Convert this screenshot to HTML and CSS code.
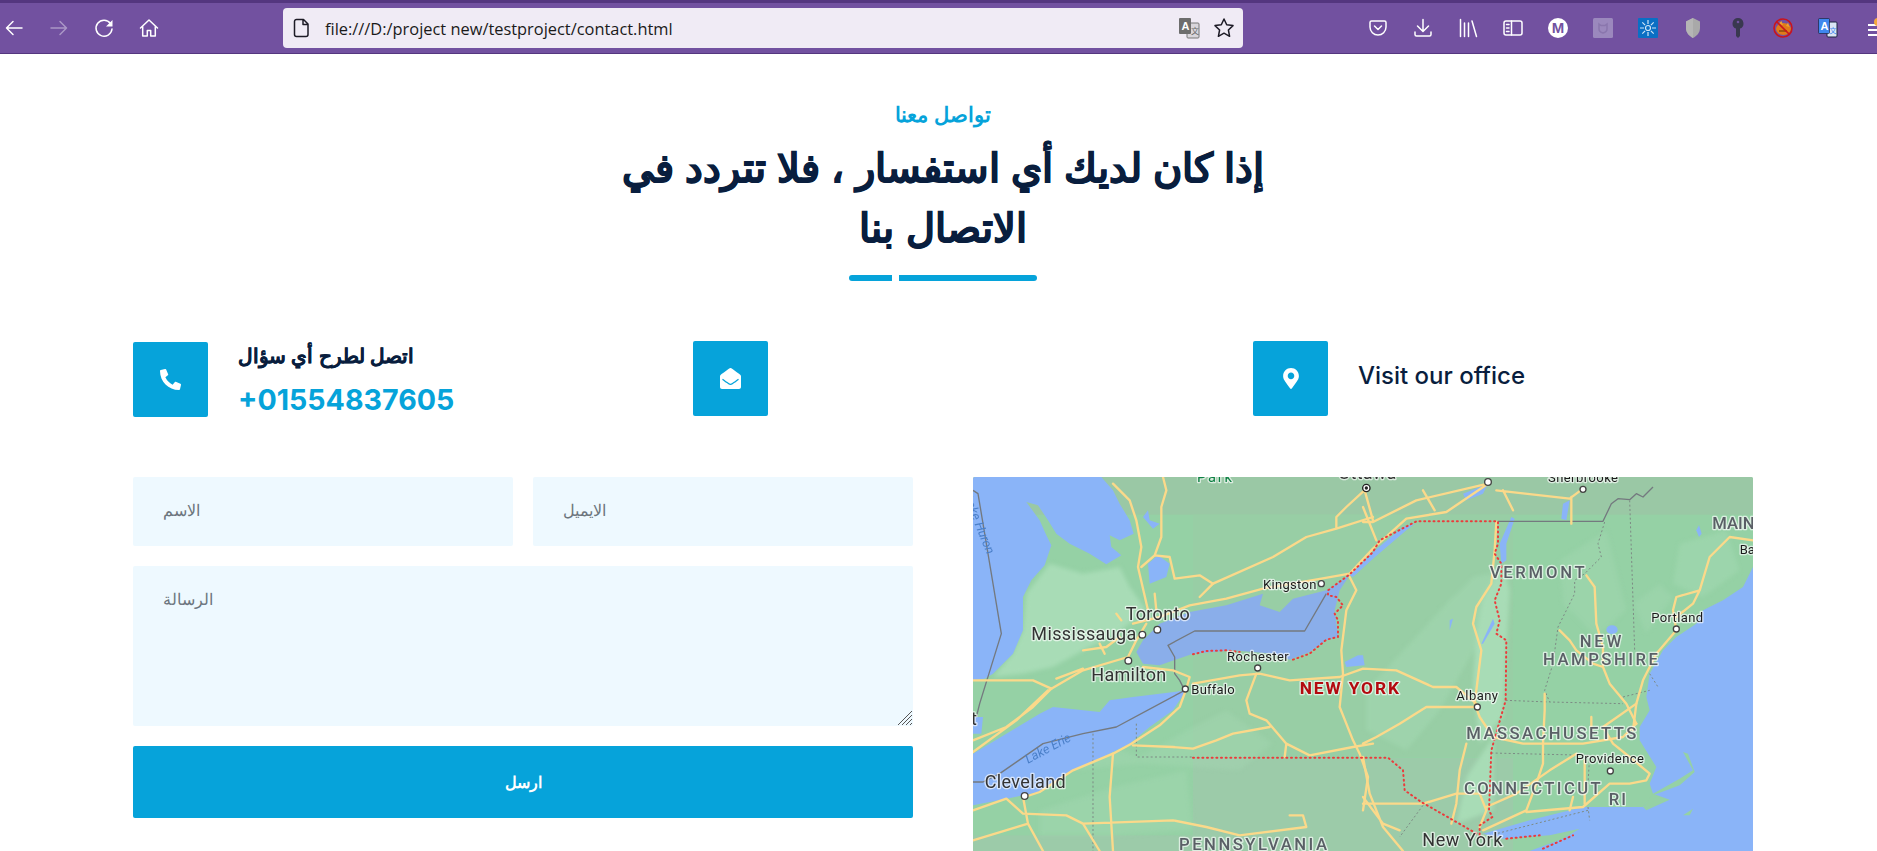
FILE: index.html
```html
<!DOCTYPE html>
<html lang="ar">
<head>
  <meta charset="UTF-8" />
  <meta name="viewport" content="width=device-width, initial-scale=1.0" />
  <title>contact</title>
  <link rel="stylesheet" href="styles.css">
</head>
<body>
  <!-- browser bar -->
  <header class="toolbar">
    <div class="nav-btns">
      <span class="tb-btn"><svg width="20" height="20" viewBox="0 0 20 20" class="ic"><path d="M18 10H2.500M9 3.500 2.500 10 9 16.500"/></svg></span>
      <span class="tb-btn dim"><svg width="20" height="20" viewBox="0 0 20 20" class="ic"><path d="M2 10h15.500M11 3.500 17.500 10 11 16.500"/></svg></span>
      <span class="tb-btn"><svg width="20" height="20" viewBox="0 0 20 20" class="ic"><path d="M16.500 5.500A8 8 0 1 0 18 11"/><path class="solid" d="M18.500 2v6.500H12z"/></svg></span>
      <span class="tb-btn"><svg width="20" height="20" viewBox="0 0 20 20" class="ic"><path d="M1.500 10 10 2l8.500 8M3.700 8.500V18h4.600v-5.500h3.400V18h4.600V8.500"/></svg></span>
    </div>
    <div class="urlbar">
      <svg class="ic dark" width="18" height="20" viewBox="0 0 18 20"><path d="M3.500 1.500h7l4.500 4.500v10.500a2 2 0 0 1-2 2H3.500a2 2 0 0 1-2-2v-13a2 2 0 0 1 2-2zM10 1.500V6.500h5"/></svg>
      <span class="url-text">file:///D:/project new/testproject/contact.html</span>
      <svg class="url-trans" width="22" height="22" viewBox="0 0 22 22"><rect x="9" y="6" width="12" height="15" rx="1" fill="#d9d6dc" stroke="#777"/><rect x="1" y="1" width="12" height="16" rx="1" fill="#6d6d6d"/><text x="3.500" y="13" class="tr-a">A</text><text x="13" y="17" class="tr-b">文</text></svg>
      <svg class="ic dark" width="22" height="22" viewBox="0 0 22 22"><path d="m11 2 2.700 5.800 6.300.8-4.600 4.400 1.200 6.300L11 16.200l-5.600 3.100 1.200-6.300L2 8.600l6.300-.8z"/></svg>
    </div>
    <div class="ext-btns">
      <span class="tb-btn"><svg width="20" height="20" viewBox="0 0 20 20" class="ic"><path d="M3.500 3h13A1.500 1.500 0 0 1 18 4.500V9a8 8 0 0 1-16 0V4.500A1.500 1.500 0 0 1 3.500 3z"/><path d="m6.500 8 3.500 3.500L13.500 8"/></svg></span>
      <span class="tb-btn"><svg width="20" height="20" viewBox="0 0 20 20" class="ic"><path d="M10 1.500V13M4.500 8l5.500 5.500L15.500 8M2 14v2.500A1.500 1.500 0 0 0 3.500 18h13a1.500 1.500 0 0 0 1.500-1.500V14"/></svg></span>
      <span class="tb-btn"><svg width="20" height="20" viewBox="0 0 20 20" class="ic"><path d="M2.500 1.500v17M6.500 5v13.500M10.500 5v13.500M14 3l4.500 15.500"/></svg></span>
      <span class="tb-btn"><svg width="20" height="20" viewBox="0 0 20 20" class="ic"><rect x="1" y="3" width="18" height="14" rx="2"/><path d="M8.500 3v14M3.500 6.500H6M3.500 10H6M3.500 13.500H6"/></svg></span>
      <span class="tb-btn"><svg width="20" height="20" viewBox="0 0 20 20"><circle cx="10" cy="10" r="10" fill="#fff"/><text x="10" y="15" class="m-txt">M</text></svg></span>
      <span class="tb-btn"><svg width="20" height="20" viewBox="0 0 20 20"><rect width="20" height="20" rx="1.500" fill="#9b88bd"/><path d="M6 6l2 1.500h4L14 6v5c0 2-2 3.500-4 4-2-.5-4-2-4-4z" fill="none" stroke="#8a76ad" stroke-width="1.500"/></svg></span>
      <span class="tb-btn"><svg width="20" height="20" viewBox="0 0 20 20"><rect width="20" height="20" rx="1" fill="#0a6fc4"/><g stroke="#cfe6f7" stroke-width="1.200"><path d="M10 2v4M10 14v4M2 10h4M14 10h4M4.300 4.300l2.800 2.800M15.700 4.300l-2.800 2.800M4.300 15.700l2.800-2.800M15.700 15.700l-2.800-2.800"/><circle cx="10" cy="10" r="2.500" fill="none"/></g></svg></span>
      <span class="tb-btn"><svg width="16" height="20" viewBox="0 0 16 20"><path d="M8 0 15 3.500V10c0 5-3.500 8-7 10-3.500-2-7-5-7-10V3.500z" fill="#a9a9a9"/><path d="M8 0 1 3.500V10c0 5 3.500 8 7 10z" fill="#b5b5b5"/></svg></span>
      <span class="tb-btn"><svg width="12" height="20" viewBox="0 0 12 20"><path d="M6 0a5.500 5.500 0 0 1 2 10.600V18l-2 2-2-2v-7.400A5.500 5.500 0 0 1 6 0z" fill="#39384f"/><circle cx="6" cy="4" r="1.300" fill="#7251a0"/></svg></span>
      <span class="tb-btn"><svg width="20" height="20" viewBox="0 0 20 20"><ellipse cx="10.500" cy="11" rx="7.500" ry="6" fill="#e07b1a"/><path d="M5 6l3.500-3 1.500 4zM15 4.500l1.500 4.500-3.500-1z" fill="#f0a030"/><path d="M6 13h8" stroke="#8a4a10" stroke-width="1.500"/><circle cx="10" cy="10" r="9" fill="none" stroke="#c9141e" stroke-width="1.600"/><path d="m3.700 3.700 12.600 12.600" stroke="#c9141e" stroke-width="1.600"/></svg></span>
      <span class="tb-btn"><svg width="20" height="20" viewBox="0 0 20 20"><rect x="9" y="4" width="10" height="15" rx="1" fill="#dce6f5" stroke="#1d2440"/><rect x="0.500" y="0.500" width="11" height="15" rx="1" fill="#3f87ee" stroke="#1d2440" stroke-width=".7"/><text x="2.500" y="11.500" class="tr-w">A</text><text x="11.500" y="15" class="tr-c">文</text></svg></span>
      <span class="tb-btn"><svg width="20" height="20" viewBox="0 0 20 20"><path d="M5 7h15M5 12h15M5 17h15" stroke="#fff" stroke-width="2" fill="none"/><circle cx="15" cy="4" r="4" fill="#f4a93c"/></svg></span>
    </div>
  </header>

  <main class="page">
    <div class="section-title">
      <h5 class="sub" dir="rtl">تواصل معنا</h5>
      <h1 class="main-title" dir="rtl">إذا كان لديك أي استفسار ، فلا تتردد في الاتصال بنا</h1>
      <div class="divider"><span class="bar-short"></span><span class="bar-long"></span></div>
    </div>

    <div class="info-row">
      <div class="info-item">
        <div class="info-icon"><svg width="21" height="21" viewBox="0 0 512 512"><path d="M497.390 361.800l-112-48a24 24 0 0 0-28 6.900l-49.600 60.600A370.660 370.660 0 0 1 130.600 204.110l60.600-49.600a23.940 23.940 0 0 0 6.900-28l-48-112A24.160 24.160 0 0 0 122.600.610l-104 24A24 24 0 0 0 0 48c0 256.500 207.900 464 464 464a24 24 0 0 0 23.400-18.600l24-104a24.290 24.290 0 0 0-14.010-27.600z"/></svg></div>
        <div class="info-text">
          <h5 class="info-label" dir="rtl">اتصل لطرح أي سؤال</h5>
          <h4 class="info-value">+01554837605</h4>
        </div>
      </div>
      <div class="info-item">
        <div class="info-icon"><svg width="21" height="21" viewBox="0 0 512 512"><path d="M512 464c0 26.510-21.490 48-48 48H48c-26.510 0-48-21.490-48-48V200.724a48 48 0 0 1 18.387-37.776c24.913-19.529 45.501-35.365 164.200-121.511C199.412 29.170 232.797-.347 256 .003c23.198-.354 56.596 29.172 73.413 41.433 118.687 86.137 139.303 101.995 164.200 121.512A48 48 0 0 1 512 200.724V464zm-65.666-196.605c-2.563-3.728-7.700-4.595-11.339-1.907-22.845 16.873-55.462 40.705-105.582 77.079-16.825 12.266-50.210 41.781-73.413 41.430-23.211.344-56.559-29.143-73.413-41.430-50.114-36.370-82.734-60.204-105.582-77.079-3.639-2.688-8.776-1.821-11.339 1.907l-9.072 13.196a7.998 7.998 0 0 0 1.839 10.967c22.887 16.899 55.454 40.690 105.303 76.868 20.274 14.781 56.524 47.813 92.264 47.573 35.724.242 71.961-32.771 92.263-47.573 49.850-36.179 82.418-59.970 105.303-76.868a7.998 7.998 0 0 0 1.839-10.967l-9.071-13.196z"/></svg></div>
      </div>
      <div class="info-item">
        <div class="info-icon"><svg width="16" height="21" viewBox="0 0 384 512"><path d="M172.268 501.670C26.970 291.031 0 269.413 0 192 0 85.961 85.961 0 192 0s192 85.961 192 192c0 77.413-26.970 99.031-172.268 309.670-9.535 13.774-29.930 13.773-39.464 0zM192 272c44.183 0 80-35.817 80-80s-35.817-80-80-80-80 35.817-80 80 35.817 80 80 80z"/></svg></div>
        <div class="info-text"><h4 class="info-office">Visit our office</h4></div>
      </div>
    </div>

    <div class="contact-row">
      <form class="contact-form">
        <div class="form-pair">
          <input class="field" type="text" placeholder="الاسم" />
          <input class="field" type="email" placeholder="الايميل" />
        </div>
        <div class="area-wrap">
          <textarea class="field area" placeholder="الرسالة"></textarea>
          <svg class="grip" width="14" height="14" viewBox="0 0 14 14"><path d="M14 0 0 14M14 4 4 14M14 8 8 14M14 12l-2 2"/></svg>
        </div>
        <button class="send" type="button">ارسل</button>
      </form>

      <div class="map">
        <!-- map units are 1/3 px so shapes can be read straight off the crops -->
        <svg viewBox="0 0 2340 1122" width="780" height="374">
          <rect width="2340" height="1122" fill="#95d1a5"/>
          <!-- tiles -->
          <rect x="0" y="0" width="2340" height="113" fill="#9ac8a5"/>
          <rect x="660" y="113" width="960" height="727" fill="#98cea5"/>
          <rect x="660" y="843" width="960" height="279" fill="#9ccba9"/>
          <rect x="0" y="1075" width="660" height="47" fill="#9ccba9"/>
          <!-- lighter land -->
          <g class="lite">
            <path d="M160 350 230 260 330 290 440 270 470 330 520 400 430 470 330 520 240 570 150 590 60 600 120 530 150 460z"/>
            <path d="M1180 640 1420 380 1500 300 1600 280 1560 420 1480 560 1400 700 1300 820 1180 760z" opacity=".4"/>
            <path d="M1530 360 1590 260 1610 340 1600 520 1590 720 1520 800 1500 620 1510 470z"/>
            <path d="M240 740 500 840 640 760 760 700 900 800 800 880 500 860 300 880z" opacity=".3"/>
            <path d="M200 1000 420 930 640 880 660 1060 420 1075 200 1075z" opacity=".3"/>
            <path d="M1760 250 1900 160 1960 400 1870 480 1770 380z" opacity=".3"/>
            <path d="M2120 200 2260 160 2300 280 2190 360 2100 320z" opacity=".4"/>
            <path d="M1560 780 1560 1000 1450 1040 1480 900z"/>
            <path d="M1980 380 2060 320 2100 360 2020 470z" opacity=".3"/>
          </g>
          <!-- water -->
          <g class="water">
            <path d="M0 0H385L420 40 440 80 470 130 482 170 440 190 410 175 415 210 445 235 400 262 350 230 290 200 250 170 225 130 195 85 160 75 200 130 220 175 235 205 215 265 175 310 150 360V460L120 530 60 590 35 605 0 610z"/>
            <path d="M525 260 555 235 590 260 580 300 530 320z"/>
            <path d="M0 830 100 770 200 710 240 690 380 705 410 670 480 660 640 640 600 700 530 750 470 800 400 835 300 880 200 945 100 965 0 985z"/>
            <path d="M0 720H30L25 770H0z"/>
            <path d="M510 120 525 100 530 130 560 140 540 155z"/>
            <path d="M1155 535H1170L1175 565 1120 570 1115 555z"/>
            <!-- atlantic -->
            <path d="M2340 270 2310 330 2250 370 2190 400 2170 440 2110 480 2070 520 2030 590 2020 660 2030 700 2000 750 2000 790 2050 870 2030 920 2040 950 2120 905 2160 880 2130 825 2145 830 2165 885 2120 925 2040 955 2010 990 1830 990 1670 1030 1530 1070 1590 1085 1730 1075 1820 1055 1770 1085 1670 1122H2340z"/>
            <path d="M1615 120 1625 125 1600 200 1600 250 1585 260 1580 200z"/>
            <path d="M1560 425 1525 500 1530 500 1565 440z"/>
            <ellipse cx="1917" cy="458" rx="17" ry="13"/>
            <path d="M1770 80 1790 70 1780 130 1765 125z"/>
            <path d="M1470 50 1545 20 1530 50 1480 70z"/>
            <path d="M1200 225 1130 295 1140 300 1200 245 1300 160 1325 140 1290 150z"/>
            <path d="M2170 160 2178 145 2186 170 2178 180z"/>
            <path d="M1430 430 1440 425 1430 460z"/>
          </g>
          <path class="lake-ont" d="M490 525 510 490 560 440 650 405 760 385 870 350 860 385 920 405 960 365 1060 340 1130 295 1100 340 1085 400 1095 480 1060 490 1010 525 950 548 900 530 780 520 660 530 560 565 510 560z"/>
          <path class="lake-land" d="M2040 950 2090 968 2020 1000 2010 990zM2130 1015 2160 995 2150 1015z"/>
          <!-- borders -->
          <path class="border" d="M0 40 15 50 85 470 20 680 10 720M0 915H30L80 890 210 800 330 770 430 750 635 640 620 610 605 590V540L585 505 665 462H995L1060 350M1575 133H1890L1915 80 1935 65 1970 68 1990 50 2010 60 2040 30"/>
          <!-- state lines -->
          <path class="state" d="M360 770V1122M490 740V840H660M1895 135 1875 200 1885 240 1835 290 1805 310V350L1755 450 1740 560 1715 640 1730 675 1950 680M1970 70 1985 520M1598 670 1730 675M1555 828 1850 835 1845 920M2030 590 2055 630M1950 660 2030 640M1350 985 1280 1080M1845 1000 1570 1070M1845 990 1850 1030"/>
          <!-- roads -->
          <g class="road">
            <path d="M420 20 470 70 490 130 505 210 495 270 525 400M570 0 580 40 565 90V180L545 235 505 270M545 235 590 240 605 305 680 295 720 320"/>
            <path d="M480 440 560 420 650 385 760 365 870 335 1045 305 1130 290 1200 215 1300 125 1420 105 1545 20"/>
            <path d="M680 360 720 320 900 240 1000 180 1090 155 1200 120M1180 35 1120 90 1090 120V155M1175 40 1200 130"/>
            <path d="M0 610H180L235 635 330 580 465 540 490 490 520 440M250 605 330 575M330 520 400 510 440 480M380 500 395 530M430 410 445 430M545 350 550 400"/>
            <path d="M235 635 180 690 100 750 0 790M225 640 130 730 0 825"/>
            <path d="M510 570 600 580 650 600 640 635 620 690 560 745 475 800 420 830 300 880 200 945 155 960"/>
            <path d="M660 620 800 595 860 590 950 610 1100 600 1170 575 1270 580 1380 630 1450 630 1510 680"/>
            <path d="M1110 590 1105 520 1120 400 1150 340 1130 300M1110 590 1100 690 1140 790 1160 830 1185 900 1170 1000"/>
            <path d="M850 590 820 670 830 710 880 730 940 800 935 840M480 805 600 810 660 815 730 790 780 770 890 750M940 800 1010 835 1140 810 1200 800"/>
            <path d="M420 830 410 960 420 1122M0 1000 100 965 150 1010 280 1015 330 1040 600 1030 700 1050 800 1075 1000 1050 990 1015 950 1015M150 960 165 1040 210 1122M0 1090 165 1040M330 1040 380 1122"/>
            <path d="M1570 135 1565 220 1555 320 1510 390 1500 440 1525 520 1515 600 1505 680 1520 720 1560 780 1650 800H1830L1950 780 1990 740"/>
            <path d="M1510 690H1360L1280 740 1210 780 1170 800"/>
            <path d="M1170 90 1210 190M1170 135H1200L1330 70 1545 20M1570 40 1790 65 1830 35M1795 60V140M1350 40 1385 100M1590 40 1620 100"/>
            <path d="M1840 295 1865 330 1870 440 1890 510V570L1910 620 1960 680 1990 740M1760 460 1790 490 1810 520 1860 560 1890 570"/>
            <path d="M2340 190 2270 180 2210 240 2180 340 2110 360 2100 400 2110 460 2050 530 2010 610 1990 680 1980 760M2180 340 2160 380 2110 420"/>
            <path d="M1715 650V700L1710 800V860L1690 920 1660 1000 1530 1060M1660 1005 1830 990 1910 920H1970L2020 910 2030 890 1970 840 1920 800 1890 750 1990 680M1855 720V760"/>
            <path d="M1480 800 1460 880 1450 980 1435 1040M1170 980H1350L1450 950H1520L1540 1000 1520 1050M1540 990 1630 950 1730 880 1810 830M1790 1000 1800 960M1835 850V980"/>
            <path d="M1170 840 1190 950 1230 1050 1290 1122M1170 960 1230 1040 1280 1060"/>
          </g>
          <!-- red dotted outline -->
          <path class="outline" d="M660 532 700 522 760 520 800 525M960 548 1010 530 1060 488 1095 480 1095 430 1085 410 1110 385 1090 360 1065 355V340L1130 292 1200 225 1220 190 1330 133H1575V200L1565 230 1585 260V320L1565 370 1580 430 1570 470 1600 490 1598 670 1555 820 1548 1000 1558 1020 1520 1045V1075M660 842H1245L1290 880 1295 940 1345 975 1520 1075M1600 1085 1700 1075M1710 1115 1800 1075"/>
          <!-- labels -->
          <g class="city big">
            <text x="458" y="430" textLength="192">Toronto</text>
            <text x="175" y="490" textLength="315">Mississauga</text>
            <text x="355" y="613" textLength="225">Hamilton</text>
            <text x="35" y="933" textLength="243">Cleveland</text>
            <text x="1348" y="1108" textLength="240">New York</text>
            <text x="1095" y="6" textLength="175">Ottawa</text>
          </g>
          <g class="city small">
            <text x="655" y="652" textLength="130">Buffalo</text>
            <text x="870" y="335" textLength="160">Kingston</text>
            <text x="762" y="552" textLength="185">Rochester</text>
            <text x="2035" y="435" textLength="155">Portland</text>
            <text x="1450" y="670" textLength="125">Albany</text>
            <text x="1808" y="858" textLength="205">Providence</text>
            <text x="1725" y="15" textLength="210">Sherbrooke</text>
            <text x="2300" y="230">Bangor</text>
          </g>
          <text class="city big" x="12" y="745" text-anchor="end">Detroit</text>
          <text class="park" x="672" y="15" textLength="105">Park</text>
          <text class="water-label" transform="translate(-28 60) rotate(68)">Lake Huron</text>
          <text class="water-label" transform="translate(165 860) rotate(-28)">Lake Erie</text>
          <g class="state-name">
            <text x="1550" y="302" textLength="285">VERMONT</text>
            <text x="1820" y="510" textLength="125">NEW</text>
            <text x="1710" y="565" textLength="345">HAMPSHIRE</text>
            <text x="1480" y="785" textLength="510">MASSACHUSETTS</text>
            <text x="1473" y="950" textLength="410">CONNECTICUT</text>
            <text x="1907" y="985" textLength="52">RI</text>
            <text x="618" y="1120" textLength="444">PENNSYLVANIA</text>
            <text x="2218" y="155">MAINE</text>
          </g>
          <text class="ny-label" x="980" y="652" textLength="298">NEW YORK</text>
          <!-- city markers -->
          <g class="dot">
            <circle cx="553" cy="458" r="10"/><circle cx="508" cy="473" r="10"/><circle cx="466" cy="551" r="10"/>
            <circle cx="637" cy="636" r="9"/><circle cx="1045" cy="320" r="9"/><circle cx="854" cy="573" r="9"/>
            <circle cx="155" cy="957" r="10"/><circle cx="2110" cy="456" r="9"/><circle cx="1513" cy="690" r="9"/>
            <circle cx="1912" cy="882" r="9"/><circle cx="1830" cy="37" r="9"/><circle cx="1545" cy="15" r="10"/>
          </g>
          <circle class="capital" cx="1180" cy="33" r="11"/>
          <circle cx="1180" cy="33" r="5" fill="#222"/>
        </svg>
      </div>
    </div>
  </main>
</body>
</html>
```

FILE: styles.css
```css
html, body {
  margin: 0;
  height: 100%;
  overflow: hidden;
  background: #fff;
}
body {
  font-family: "Liberation Sans", sans-serif;
  color: #091e3e;
}

/* browser bar */
.toolbar {
  display: flex;
  align-items: center;
  height: 50px;
  box-sizing: content-box;
  background: #7251a0;
  border-top: 3px solid #54367f;
  border-bottom: 1px solid #54367f;
}
.nav-btns {
  display: flex;
  margin-left: -9px;
}
.ext-btns {
  display: flex;
  margin-left: auto;
  margin-right: -18px;
  flex-shrink: 0;
}
.tb-btn {
  display: flex;
  align-items: center;
  justify-content: center;
  width: 45px;
  height: 40px;
}
.dim { opacity: .4; }
.ic {
  fill: none;
  stroke: #fff;
  stroke-width: 1.5;
  stroke-linecap: round;
  stroke-linejoin: round;
}
.ic.dark { stroke: #1d1b26; }
.ic .solid { fill: #fff; stroke: none; }
.urlbar {
  display: flex;
  align-items: center;
  width: 960px;
  height: 40px;
  margin-left: 112px;
  padding: 0 8px 0 10px;
  box-sizing: border-box;
  background: #f0ebf5;
  border-radius: 4px;
  flex-shrink: 0;
}
.url-text {
  flex: 1;
  margin-left: 14px;
  font: 16.4px "Open Sans", sans-serif;
  color: #1a1a1a;
}
.url-trans { margin-right: 13px; }
.tr-a { font: bold 11px "Liberation Sans", sans-serif; fill: #fff; }
.tr-b { font: 8px "Noto Sans CJK SC", sans-serif; fill: #666; }
.tr-w { font: bold 11px "Liberation Sans", sans-serif; fill: #fff; }
.tr-c { font: 7px "Noto Sans CJK SC", sans-serif; fill: #3f87ee; }
.m-txt {
  font: bold 15px "Liberation Sans", sans-serif;
  fill: #7251a0;
  text-anchor: middle;
}

/* page */
.page {
  width: 1620px;
  margin-left: 133px;
}
.section-title {
  width: 700px;
  margin: 0 auto;
  text-align: center;
}
.sub {
  margin: 0;
  padding-top: 47px;
  font-size: 20.5px;
  line-height: 28px;
  font-weight: bold;
  color: #06a3da;
}
.main-title {
  margin: 9px 0 0;
  font-size: 40px;
  line-height: 60px;
  font-weight: bold;
  color: #091e3e;
  -webkit-text-stroke: .7px #091e3e;
}
.divider {
  display: flex;
  justify-content: center;
  gap: 7px;
  margin-top: 17px;
}
.bar-short, .bar-long {
  height: 6px;
  background: #06a3da;
}
.bar-short { width: 43px; border-radius: 3px 0 0 3px; }
.bar-long { width: 138px; border-radius: 0 3px 3px 0; }

.info-row {
  display: grid;
  grid-template-columns: repeat(3, 560px);
  margin-top: 60px;
  align-items: start;
}
.info-item {
  display: flex;
  align-items: center;
}
.info-icon {
  display: flex;
  align-items: center;
  justify-content: center;
  width: 75px;
  height: 75px;
  background: #06a3da;
  border-radius: 2px;
  flex-shrink: 0;
}
.info-icon svg { fill: #fff; }
.info-text { margin-left: 30px; }
.info-label {
  margin: 0 0 11px;
  padding-top: 1px;
  font-size: 19.5px;
  line-height: 28px;
  font-weight: bold;
  text-align: left;
  color: #091e3e;
  -webkit-text-stroke: .3px #091e3e;
}
.info-value {
  margin: 0;
  font: 700 28.6px/37px Inter, sans-serif;
  color: #06a3da;
}
.info-office {
  margin: 0 0 6px;
  font: 500 24px/30px Inter, sans-serif;
  color: #091e3e;
}

.contact-row {
  display: grid;
  grid-template-columns: 780px 780px;
  gap: 60px;
  margin-top: 59px;
}
.contact-form {
  display: flex;
  flex-direction: column;
  gap: 20px;
}
.form-pair {
  display: grid;
  grid-template-columns: 380px 380px;
  gap: 20px;
}
.field {
  display: block;
  width: 100%;
  height: 69px;
  padding: 0 30px 2px;
  box-sizing: border-box;
  border: 0;
  border-radius: 2px;
  background: #eef9ff;
  font: 16px "Liberation Sans", sans-serif;
  color: #6c757d;
}
.field::placeholder { color: #6c757d; opacity: 1; }
.area-wrap { position: relative; }
.area {
  height: 160px;
  padding: 24px 30px;
  resize: none;
}
.grip {
  position: absolute;
  right: 1px;
  bottom: 1px;
  stroke: #555;
  stroke-width: 1;
}
.send {
  height: 72px;
  border: 0;
  border-radius: 2px;
  background: #06a3da;
  color: #fff;
  font: bold 16px "Liberation Sans", sans-serif;
}

/* map */
.map {
  height: 374px;
  overflow: hidden;
  border-radius: 2px 2px 0 0;
}
.map svg { display: block; }
.water path, .water ellipse { fill: #8ab4f8; }
.lake-ont { fill: #8aaeea; }
.lake-land { fill: #95d1a5; }
.lite { filter: blur(6px); }
.lite path { fill: #a8dcb6; }
.border { fill: none; stroke: #74797f; stroke-width: 4; stroke-linejoin: round; }
.state { fill: none; stroke: #7d8a84; stroke-width: 3; stroke-dasharray: 6 7; }
.road path { fill: none; stroke: #fbd98a; stroke-width: 7; stroke-linejoin: round; stroke-linecap: round; }
.outline {
  fill: none;
  stroke: #ea3c3c;
  stroke-width: 6;
  stroke-linecap: round;
  stroke-linejoin: round;
  stroke-dasharray: 3 11;
}
.map text {
  font-family: Roboto, sans-serif;
  paint-order: stroke;
  stroke: rgba(255, 255, 255, .65);
  stroke-width: 8px;
  stroke-linejoin: round;
}
.city { fill: #222; }
.city.big text, text.city.big { font-size: 54px; font-weight: 400; fill: #333; }
.city.small text { font-size: 39px; fill: #1c1c1c; }
.park { font-size: 44px; fill: #0d8043; }
.water-label { font-size: 38px; font-style: italic; fill: #4a7fc8; stroke: none !important; }
.state-name text { font-size: 50px; font-weight: 500; fill: #5a5f66; }
.ny-label { font-size: 52px; font-weight: 700; fill: #b3090f; }
.dot circle { fill: #fff; stroke: #444; stroke-width: 4; }
.capital { fill: #fff; stroke: #222; stroke-width: 4; }
```
